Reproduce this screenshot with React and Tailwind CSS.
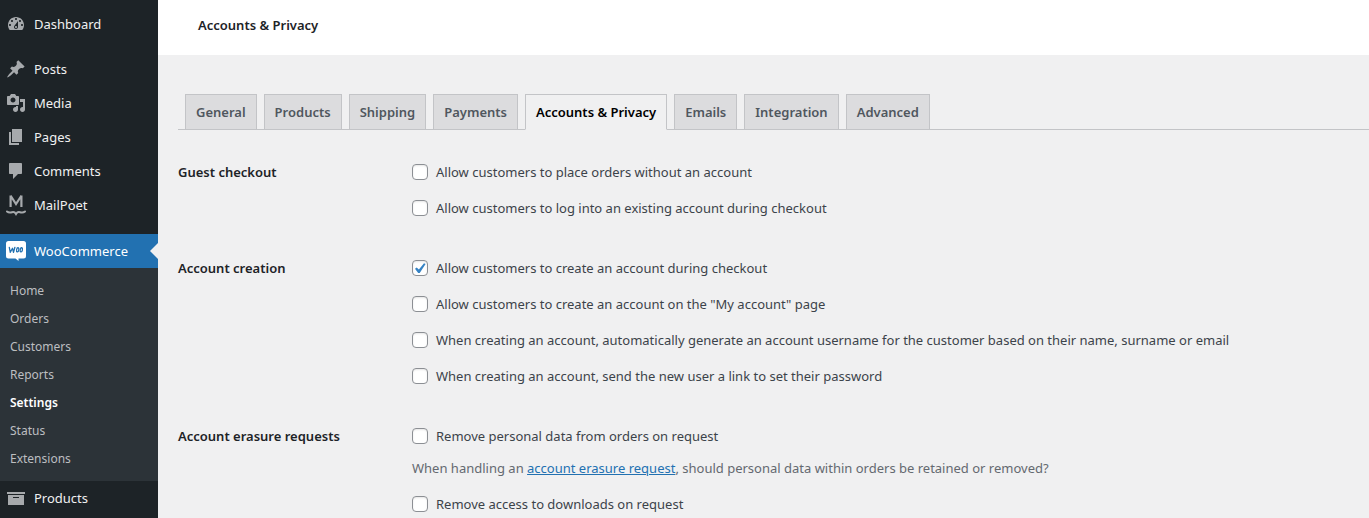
import React from 'react';
import clsx from 'clsx';

const icons = {
  dashboard:
    'M3.76 16h12.48c1.1-1.37 1.76-3.11 1.76-5 0-4.42-3.58-8-8-8s-8 3.58-8 8c0 1.89.66 3.63 1.76 5zM10 4c.55 0 1 .45 1 1s-.45 1-1 1-1-.45-1-1 .45-1 1-1zM6 6c.55 0 1 .45 1 1s-.45 1-1 1-1-.45-1-1 .45-1 1-1zm8 0c.55 0 1 .45 1 1s-.45 1-1 1-1-.45-1-1 .45-1 1-1zm-5.37 5.55L12 7v6c0 1.1-.9 2-2 2s-2-.9-2-2c0-.57.24-1.08.63-1.45zM4 10c.55 0 1 .45 1 1s-.45 1-1 1-1-.45-1-1 .45-1 1-1zm12 0c.55 0 1 .45 1 1s-.45 1-1 1-1-.45-1-1 .45-1 1-1zm-5 3c0-.55-.45-1-1-1s-1 .45-1 1 .45 1 1 1 1-.45 1-1z',
  posts:
    'M10.44 3.02l1.82-1.82 6.36 6.35-1.83 1.82c-1.05-.68-2.48-.57-3.41.36l-.75.75c-.92.93-1.04 2.35-.35 3.41l-1.83 1.82-2.41-2.41-2.8 2.79c-.42.42-3.38 2.71-3.8 2.29s1.86-3.39 2.28-3.81l2.79-2.79L4.1 9.36l1.83-1.82c1.05.69 2.48.57 3.4-.36l.75-.75c.93-.92 1.05-2.35.36-3.41z',
  media:
    'M13 11V4c0-.55-.45-1-1-1h-1.67L9 1H5L3.67 3H2c-.55 0-1 .45-1 1v7c0 .55.45 1 1 1h10c.55 0 1-.45 1-1zM7 4.5c1.38 0 2.5 1.12 2.5 2.5S8.38 9.5 7 9.5 4.5 8.38 4.5 7 5.62 4.5 7 4.5zM14 6h5v10.5c0 1.38-1.12 2.5-2.5 2.5S14 17.88 14 16.5s1.12-2.5 2.5-2.5c.17 0 .34.02.5.05V9h-3V6zm-4 8.05V13h2v3.5c0 1.38-1.12 2.5-2.5 2.5S7 17.88 7 16.5 8.12 14 9.5 14c.17 0 .34.02.5.05z',
  pages: 'M6 15V2h10v13H6zm-1 1h8v2H3V5h2v11z',
  comments:
    'M4 2h11c.55 0 1 .45 1 1v9c0 .55-.45 1-1 1h-3l-5 5v-5H4c-.55 0-1-.45-1-1V3c0-.55.45-1 1-1z',
  archive: 'M19 4v2H1V4h18zM2 7h16v10H2V7zm11 3V9H7v1h6z',
};

const MenuIcon = ({ name }) => (
  <svg viewBox="0 0 20 20" className="size-5 shrink-0 fill-[#a7aaad]" aria-hidden="true">
    <path fillRule="evenodd" d={icons[name]} />
  </svg>
);

const MailPoetIcon = () => (
  <svg
    viewBox="0 0 20 22"
    className="h-[22px] w-5 shrink-0 fill-none stroke-[#a7aaad]"
    aria-hidden="true"
  >
    <path d="M4.6 13V1.500M15.400 13V1.500M4.800 2l5.200 8 5.200-8" strokeWidth="2.200" />
    <path
      d="M1 17.500c1.400 1.200 3.500 1.200 5 .7 1.700-.5 3 .1 4 1.800 1-1.700 2.300-2.300 4-1.800 1.500.5 3.600.5 5-.7"
      strokeWidth="2"
      strokeLinecap="round"
    />
  </svg>
);

const WooIcon = () => (
  <svg viewBox="0 0 20 20" className="size-5 shrink-0" aria-hidden="true">
    <path
      d="M2.500 0h15A2.500 2.500 0 0 1 20 2.500v12.500a2.500 2.500 0 0 1-2.500 2.500H12.500V20L9.500 17.500h-7A2.500 2.500 0 0 1 0 15V2.500A2.500 2.500 0 0 1 2.500 0z"
      fill="#fff"
    />
    <g fill="none" stroke="#2271b1" strokeWidth="1.300" strokeLinecap="round" strokeLinejoin="round">
      <path d="M3.300 6.300l1 5 2.200-4 1 4 1.400-5" />
      <ellipse cx="11.700" cy="8.800" rx="1.100" ry="2.100" transform="rotate(12 11.700 8.800)" />
      <ellipse cx="15.300" cy="8.800" rx="1.100" ry="2.100" transform="rotate(12 15.300 8.800)" />
    </g>
  </svg>
);

const MenuItem = ({ icon, label, current }) => (
  <a
    href="#"
    className={clsx(
      'relative flex h-[34px] items-center gap-2 pl-1.5 text-[13px] text-[#f0f0f1]',
      current && 'bg-[#2271b1] text-white',
    )}
  >
    {icon}
    <span className="pt-0.5">{label}</span>
    {current && (
      <span className="absolute top-[9px] right-0 border-y-8 border-r-8 border-y-transparent border-r-[#f0f0f1]" />
    )}
  </a>
);

const submenu = ['Home', 'Orders', 'Customers', 'Reports', 'Settings', 'Status', 'Extensions'];

const tabs = [
  'General',
  'Products',
  'Shipping',
  'Payments',
  'Accounts & Privacy',
  'Emails',
  'Integration',
  'Advanced',
];

const Sidebar = () => (
  <nav className="w-[158px] shrink-0 bg-[#1d2327] pt-[7px]">
    <MenuItem icon={<MenuIcon name="dashboard" />} label="Dashboard" />
    <div className="mt-[11px] mb-3">
      <MenuItem icon={<MenuIcon name="posts" />} label="Posts" />
      <MenuItem icon={<MenuIcon name="media" />} label="Media" />
      <MenuItem icon={<MenuIcon name="pages" />} label="Pages" />
      <MenuItem icon={<MenuIcon name="comments" />} label="Comments" />
      <MenuItem icon={<MailPoetIcon />} label="MailPoet" />
    </div>
    <MenuItem icon={<WooIcon />} label="WooCommerce" current />
    <ul className="bg-[#2c3338] pt-[9px] pb-2 text-[12px]">
      {submenu.map((item) => (
        <li key={item}>
          <a
            href="#"
            className={clsx(
              'flex h-7 items-center px-2.5',
              item === 'Settings' ? 'font-semibold text-white' : 'text-[#bcbec0]',
            )}
          >
            {item}
          </a>
        </li>
      ))}
    </ul>
    <MenuItem icon={<MenuIcon name="archive" />} label="Products" />
  </nav>
);

const Option = ({ label, defaultChecked }) => (
  <label className="flex h-5 items-center gap-2 text-[#3c434a]">
    <span className="relative flex size-4 shrink-0">
      <input
        type="checkbox"
        defaultChecked={defaultChecked}
        className="peer size-4 appearance-none rounded border border-[#8c8f94] bg-white shadow-[inset_0_1px_2px_rgba(0,0,0,0.1)]"
      />
      <svg
        viewBox="0 0 16 16"
        className="pointer-events-none absolute inset-0 hidden size-4 fill-[#3582c4] peer-checked:block"
        aria-hidden="true"
      >
        <path d="M12 3.200l1.600.8L7.700 13H6.200L3 8.700l1.700-1.300 2.200 2.100z" />
      </svg>
    </span>
    <span className="pt-0.5">{label}</span>
  </label>
);

const Section = ({ title, children }) => (
  <section className="flex">
    <h2 className="w-[234px] shrink-0 leading-5 font-semibold text-[#1d2327]">{title}</h2>
    <div className="flex flex-col gap-4">{children}</div>
  </section>
);

const App = () => (
  <div className="flex h-screen overflow-hidden bg-[#f0f0f1] font-['Noto_Sans','Open_Sans',sans-serif] text-[13px]">
    <Sidebar />
    <main className="min-w-0 flex-1">
      <header className="flex h-[55px] items-center bg-white px-10 pb-1">
        <h1 className="font-semibold text-[#1d2327]">Accounts &amp; Privacy</h1>
      </header>

      <div className="pt-[39px] pl-5">
        {/* Tabs */}
        <nav className="flex gap-[7px] border-b border-[#c3c4c7] pl-[7px]">
          {tabs.map((tab) => (
            <a
              key={tab}
              href="#"
              className={clsx(
                '-mb-px flex h-9 items-center border border-[#c3c4c7] px-2.5 pt-0.5 font-semibold whitespace-nowrap',
                tab === 'Accounts & Privacy'
                  ? 'border-b-[#f0f0f1] bg-[#f0f0f1] text-black'
                  : 'bg-[#dcdcde] text-[#50575e]',
              )}
            >
              {tab}
            </a>
          ))}
        </nav>

        <form className="flex flex-col gap-10 pt-8">
          <Section title="Guest checkout">
            <Option label="Allow customers to place orders without an account" />
            <Option label="Allow customers to log into an existing account during checkout" />
          </Section>
          <Section title="Account creation">
            <Option label="Allow customers to create an account during checkout" defaultChecked />
            <Option label={'Allow customers to create an account on the "My account" page'} />
            <Option label="When creating an account, automatically generate an account username for the customer based on their name, surname or email" />
            <Option label="When creating an account, send the new user a link to set their password" />
          </Section>
          <Section title="Account erasure requests">
            <div className="flex flex-col gap-3">
              <Option label="Remove personal data from orders on request" />
              <p className="leading-5 text-[#646970]">
                When handling an{' '}
                <a href="#" className="text-[#2271b1] underline">
                  account erasure request
                </a>
                , should personal data within orders be retained or removed?
              </p>
            </div>
            <Option label="Remove access to downloads on request" />
          </Section>
        </form>
      </div>
    </main>
  </div>
);

export default App;
